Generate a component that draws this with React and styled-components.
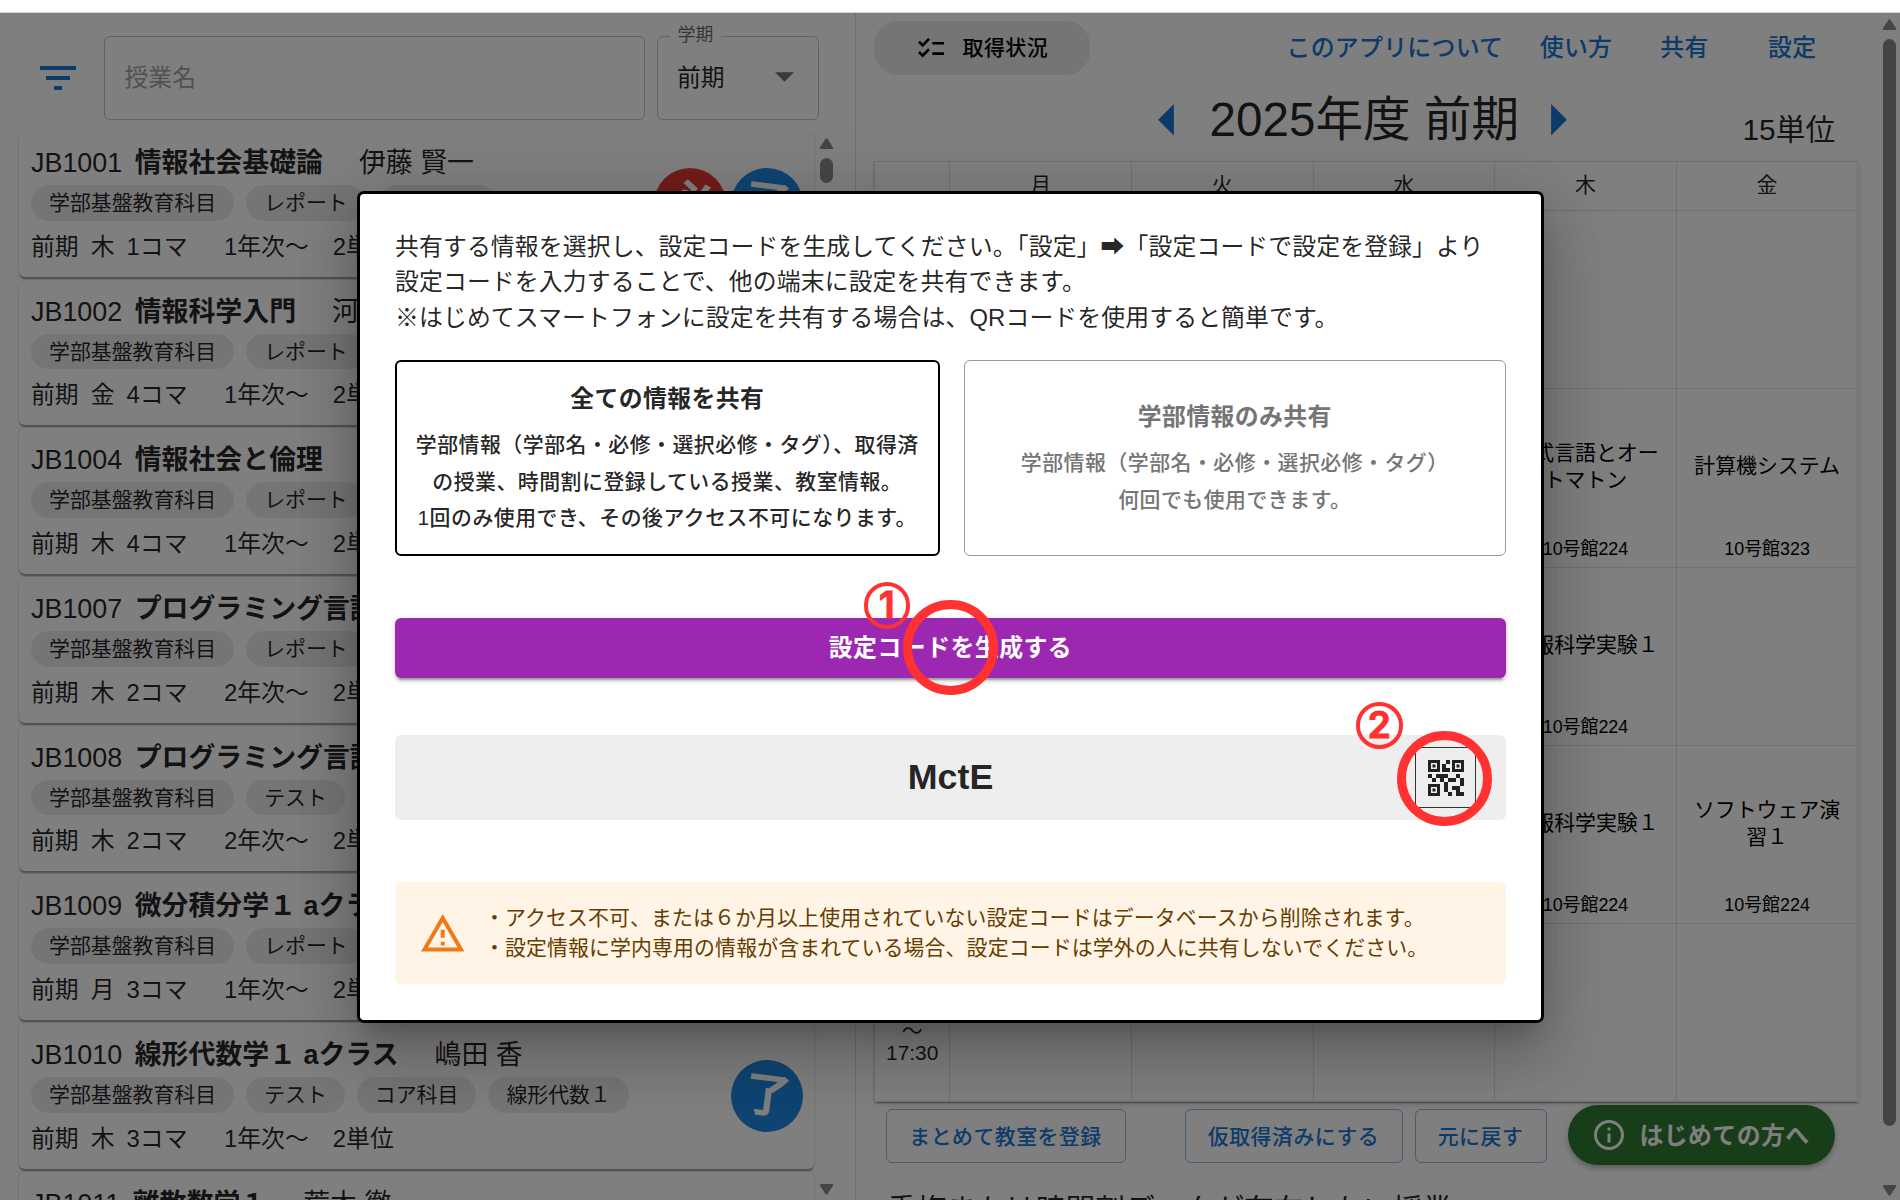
import React from 'react';
import styled, { createGlobalStyle } from 'styled-components';

const Global = createGlobalStyle`
  * { box-sizing: border-box; }
  html, body { margin: 0; padding: 0; height: 1200px; overflow: hidden; background: #fff; }
  body {
    font-family: "Liberation Sans", "Noto Sans CJK JP", sans-serif;
    color: rgba(0, 0, 0, 0.87);
  }
  button { font-family: inherit; background: none; border: 0; padding: 0; margin: 0; color: inherit; }
`;

const Page = styled.div`
  position: relative;
  display: flex;
  flex-direction: column;
  width: 1900px;
  height: 1200px;
  overflow: hidden;
`;
const TopStrip = styled.div`
  flex: none;
  height: 13px;
  border-bottom: 1px solid #d4d4d4;
`;
const Body = styled.div`
  flex: 1;
  display: flex;
  min-height: 0;
`;

/* ---------- left panel ---------- */
const LeftPanel = styled.aside`
  width: 856px;
  flex: none;
  display: flex;
  flex-direction: column;
  border-right: 1px solid #e0e0e0;
`;
const SearchBar = styled.div`
  flex: none;
  height: 118px;
  display: flex;
  align-items: flex-start;
  padding: 23px 0 0 40px;
`;
const FilterButton = styled.button`
  width: 36px;
  height: 83px;
  margin-right: 28px;
  display: flex;
  align-items: center;
  color: #1976d2;
`;
const Field = styled.div`
  position: relative;
  display: flex;
  align-items: center;
  justify-content: space-between;
  width: ${(p) => p.$w}px;
  height: 83.5px;
  margin-right: 12px;
  padding: 0 24px 4px 19.5px;
  border: 1.5px solid rgba(0, 0, 0, 0.23);
  border-radius: 6px;
  font-size: 23.85px;
  color: ${(p) => (p.$muted ? '#a2a2a2' : 'rgba(0,0,0,0.87)')};
`;
const FieldLabel = styled.label`
  position: absolute;
  left: 12px;
  top: -12px;
  padding: 0 8px;
  background: #fff;
  font-size: 17.9px;
  line-height: 20px;
  color: rgba(0, 0, 0, 0.6);
`;
const SelectArrow = styled.svg`
  display: block;
  margin-top: 3px;
`;
const ListArea = styled.div`
  flex: 1;
  min-height: 0;
  display: flex;
  padding-left: 19px;
  overflow: hidden;
`;
const CardList = styled.div`
  width: 795px;
  display: flex;
  flex-direction: column;
  gap: 3px;
  margin-right: 5px;
`;
const Card = styled.article`
  flex: none;
  display: flex;
  justify-content: space-between;
  align-items: center;
  height: 145.7px;
  padding: 0 11px 0 12px;
  border-radius: 6px;
  background: #fff;
  box-shadow: 0 3px 1.5px -1.5px rgba(0, 0, 0, 0.2), 0 1.5px 1.5px 0 rgba(0, 0, 0, 0.14),
    0 1.5px 4.5px 0 rgba(0, 0, 0, 0.12);
`;
const CardMain = styled.div`
  display: flex;
  flex-direction: column;
  align-self: flex-start;
  padding-top: 11px;
`;
const CardTitle = styled.div`
  display: flex;
  white-space: nowrap;
  font-size: 26.9px;
  line-height: 42px;
`;
const Code = styled.span`
  margin-right: 12.5px;
`;
const Subject = styled.strong`
  margin-right: 36px;
`;
const Chips = styled.div`
  display: flex;
  gap: 12px;
  margin-top: 1px;
`;
const Chip = styled.span`
  height: 35.6px;
  line-height: 35px;
  padding: 0 18px;
  border-radius: 18px;
  background: rgba(0, 0, 0, 0.08);
  font-size: 20.9px;
  white-space: nowrap;
`;
const Meta = styled.div`
  display: flex;
  margin-top: 8px;
  font-size: 23.85px;
  line-height: 36px;
  white-space: nowrap;
`;
const MetaItem = styled.span`
  margin-right: ${(p) => p.$gap || 12}px;
`;
const Badges = styled.div`
  display: flex;
  gap: 5px;
`;
const Badge = styled.span`
  width: 72px;
  height: 72px;
  border-radius: 50%;
  display: flex;
  align-items: center;
  justify-content: center;
  background: ${(p) => p.$bg};
  color: #fff;
  font-size: 47px;
  line-height: 60px;
  font-weight: 700;
`;
const BadgeText = styled.span`
  transform: rotate(7deg);
`;

/* ---------- scrollbars ---------- */
const Scrollbar = styled.div`
  flex: none;
  width: 15px;
  display: flex;
  flex-direction: column;
  align-items: center;
  margin-right: ${(p) => p.$edge || 0}px;
  padding: ${(p) => p.$pad};
`;
const Thumb = styled.div`
  width: 13px;
  height: ${(p) => p.$h}px;
  margin: 9px 0 auto;
  border-radius: 7px;
  background: #8b8b8b;
`;

/* ---------- right panel ---------- */
const RightPanel = styled.main`
  flex: 1;
  min-width: 0;
  display: flex;
  flex-direction: column;
  padding: 8px 0 0 18px;
`;
const TopRow = styled.div`
  flex: none;
  display: flex;
  align-items: center;
  height: 54px;
`;
const StatusChip = styled.button`
  display: flex;
  align-items: center;
  width: 216px;
  height: 54px;
  padding-left: 43.5px;
  gap: 19px;
  border-radius: 24px;
  background: rgba(0, 0, 0, 0.08);
  color: #000;
  font-size: 21px;
  letter-spacing: 0.4px;
  font-weight: 500;
`;
const StatusText = styled.span`
  padding-bottom: 4px;
`;
const Nav = styled.nav`
  display: flex;
  margin-left: 196.5px;
  padding-bottom: 4.5px;
`;
const NavLink = styled.button`
  font-size: 23.9px;
  letter-spacing: 0.27px;
  font-weight: 500;
  color: #1976d2;
  margin-right: ${(p) => p.$gap}px;
  white-space: nowrap;
`;
const TermRow = styled.div`
  flex: none;
  display: flex;
  align-items: center;
  height: 86px;
  padding: 4px 0 0 284px;
  color: #1976d2;
`;
const Term = styled.h1`
  margin: 0 32.5px 0 35.5px;
  font-size: 47.6px;
  line-height: 72px;
  font-weight: 400;
  color: rgba(0, 0, 0, 0.87);
  white-space: nowrap;
`;
const Credits = styled.span`
  margin: 14px 0 0 175px;
  font-size: 29.8px;
  color: rgba(0, 0, 0, 0.87);
`;
const Timetable = styled.div`
  flex: none;
  display: grid;
  grid-template-columns: 75.4px repeat(5, 181.6px);
  grid-template-rows: 49px repeat(5, 178.3px);
  width: 984.8px;
  border-top: 1px solid #e0e0e0;
  border-left: 1px solid #e0e0e0;
  box-shadow: 0 3px 1.5px -1.5px rgba(0, 0, 0, 0.2), 0 1.5px 1.5px 0 rgba(0, 0, 0, 0.14),
    0 1.5px 4.5px 0 rgba(0, 0, 0, 0.12);
`;
const Cell = styled.div`
  display: flex;
  flex-direction: column;
  align-items: center;
  justify-content: center;
  text-align: center;
  border-right: 1px solid #e0e0e0;
  border-bottom: 1px solid #e0e0e0;
  font-size: 20.9px;
  line-height: 27px;
`;
const DayCell = styled(Cell)`
  padding-bottom: 3.5px;
`;
const TimeCell = styled(Cell)`
  justify-content: flex-end;
  padding: 0 0 37px;
  line-height: 22px;
`;
const Lecture = styled.div`
  flex: 1;
  display: flex;
  align-items: center;
  padding-top: 7px;
  color: #000;
`;
const Room = styled.div`
  font-size: 17.9px;
  height: 31px;
  line-height: 26px;
  color: #000;
`;
const Actions = styled.div`
  flex: none;
  display: flex;
  align-items: flex-start;
  padding: 3px 0 0 11.5px;
`;
const OutlineButton = styled.button`
  width: ${(p) => p.$w}px;
  height: 54px;
  margin: 4px ${(p) => p.$gap}px 0 0;
  padding-bottom: 3px;
  border: 1.5px solid rgba(25, 118, 210, 0.5);
  border-radius: 6px;
  color: #1976d2;
  font-size: 20.9px;
  letter-spacing: 0.5px;
  font-weight: 500;
`;
const GuideButton = styled.button`
  display: flex;
  align-items: center;
  justify-content: center;
  gap: 15px;
  width: 267px;
  height: 60px;
  padding-left: 2px;
  border-radius: 30px;
  background: #2e7d32;
  color: #fff;
  font-size: 23.9px;
  letter-spacing: 0.4px;
  font-weight: 700;
  box-shadow: 0 4px 5px -1px rgba(0, 0, 0, 0.2), 0 2px 8px 0 rgba(0, 0, 0, 0.14);
`;
const GuideText = styled.span`
  padding-bottom: 3px;
`;
const SectionTitle = styled.h2`
  flex: none;
  margin: 22px 0 0 13px;
  font-size: 29.75px;
  line-height: 46px;
  font-weight: 400;
  white-space: nowrap;
`;

/* ---------- modal ---------- */
const Backdrop = styled.div`
  position: absolute;
  inset: 13px 0 0 0;
  display: flex;
  align-items: center;
  justify-content: center;
  background: rgba(0, 0, 0, 0.5);
`;
const Modal = styled.section`
  width: 1187px;
  height: 832px;
  padding: 35px 34.5px 35px 35.5px;
  border: 3px solid #000;
  border-radius: 7px;
  background: #fff;
  display: flex;
  flex-direction: column;
  box-shadow: 0 16px 22px -10px rgba(0, 0, 0, 0.2), 0 36px 57px 4px rgba(0, 0, 0, 0.14),
    0 13px 69px 12px rgba(0, 0, 0, 0.12);
`;
const Lead = styled.p`
  margin: 0 0 24px;
  font-size: 23.85px;
  letter-spacing: 0.12px;
  line-height: 35.8px;
  white-space: nowrap;
`;
const Options = styled.div`
  display: flex;
  gap: 24px;
`;
const Option = styled.button`
  flex: 1;
  height: 196.5px;
  display: flex;
  flex-direction: column;
  align-items: center;
  justify-content: center;
  padding-bottom: 2px;
  border: ${(p) => (p.$on ? '2px solid #000' : '1.5px solid #9a9a9a')};
  border-radius: 6px;
  color: ${(p) => (p.$on ? 'rgba(0,0,0,0.87)' : '#757575')};
`;
const OptionTitle = styled.span`
  font-size: 23.85px;
  line-height: 42px;
  font-weight: 700;
  letter-spacing: 0.4px;
  margin-bottom: 7px;
`;
const OptionText = styled.span`
  font-size: 20.9px;
  line-height: 36.2px;
  font-weight: 500;
  letter-spacing: 0.5px;
  white-space: nowrap;
`;
const Generate = styled.button`
  flex: none;
  height: 59.5px;
  margin-top: 62px;
  padding-bottom: 5px;
  border-radius: 6px;
  background: #9c27b0;
  color: #fff;
  font-size: 23.85px;
  letter-spacing: 0.5px;
  font-weight: 700;
  box-shadow: 0 4.5px 1.5px -3px rgba(0, 0, 0, 0.2), 0 3px 3px 0 rgba(0, 0, 0, 0.14),
    0 1.5px 7.5px 0 rgba(0, 0, 0, 0.12);
`;
const CodeBox = styled.div`
  flex: none;
  display: grid;
  grid-template-columns: 91px 1fr 91px;
  align-items: center;
  height: 85px;
  margin-top: 57.5px;
  border-radius: 6px;
  background: #eee;
`;
const CodeText = styled.strong`
  grid-column: 2;
  text-align: center;
  font-size: 35.8px;
`;
const QrButton = styled.button`
  width: 61px;
  height: 61px;
  display: flex;
  align-items: center;
  justify-content: center;
  border: 1px solid #333;
  color: #212121;
`;
const Alert = styled.div`
  flex: none;
  display: flex;
  align-items: center;
  height: 101.5px;
  margin-top: 62px;
  padding-left: 25.5px;
  gap: 20px;
  border-radius: 6px;
  background: #fff4e5;
  color: #663c00;
`;
const AlertIcon = styled.span`
  display: flex;
  color: #ef7a19;
`;
const AlertText = styled.p`
  margin: 0;
  padding-bottom: 1px;
  font-size: 20.9px;
  letter-spacing: 0.12px;
  line-height: 29.8px;
  white-space: nowrap;
`;

/* ---------- guide marks over the page ---------- */
const Ring = styled.div`
  position: absolute;
  left: ${(p) => p.$x}px;
  top: ${(p) => p.$y}px;
  width: 95px;
  height: 95px;
  border: 9px solid #ff3131;
  border-radius: 50%;
`;
const StepMark = styled.div`
  position: absolute;
  left: ${(p) => p.$x}px;
  top: ${(p) => p.$y}px;
  width: 46.5px;
  height: 46.5px;
  border: 4px solid #ff3131;
  border-radius: 50%;
  display: flex;
  align-items: center;
  justify-content: center;
  color: #ff3131;
  font-family: Inter, sans-serif;
  font-size: 37px;
  line-height: 38px;
  font-weight: 600;
  -webkit-text-stroke: 1.2px #ff3131;
`;

const IconSvg = styled.svg`
  display: block;
  flex: none;
`;

const Glyph = ({ box, w, h, d }) => (
  <IconSvg viewBox={box} width={w} height={h} fill="currentColor">
    <path d={d} />
  </IconSvg>
);

const PATHS = {
  filter: 'M10 18h4v-2h-4v2zM3 6v2h18V6H3zm3 7h12v-2H6v2z',
  checklist:
    'M22 7h-9v2h9V7zm0 8h-9v2h9v-2zM5.54 11L2 7.46l1.41-1.41 2.12 2.12 4.24-4.24 1.41 1.41L5.54 11zm0 8L2 15.46l1.41-1.41 2.12 2.12 4.24-4.24 1.41 1.41L5.54 19z',
  info: 'M11 7h2v2h-2zm0 4h2v6h-2zm1-9C6.48 2 2 6.48 2 12s4.48 10 10 10 10-4.48 10-10S17.52 2 12 2zm0 18c-4.41 0-8-3.59-8-8s3.59-8 8-8 8 3.59 8 8-3.59 8-8 8z',
  warning: 'M12 5.99L19.53 19H4.47L12 5.99M12 2L1 21h22L12 2zm1 14h-2v2h2v-2zm0-6h-2v4h2v-4z',
  qr: 'M15 21h-2v-2h2v2zm-2-7h-2v5h2v-5zm8-2h-2v4h2v-4zm-2-2h-2v2h2v-2zM7 12H5v2h2v-2zm-2-2H3v2h2v-2zm7-5h2V3h-2v2zm-7.5-.5v3h3v-3h-3zM9 9H3V3h6v6zm-4.5 7.5v3h3v-3h-3zM9 21H3v-6h6v6zm7.5-16.5v3h3v-3h-3zM21 9h-6V3h6v6zm-2 10v-3h-4v2h2v3h4v-2h-2zm-2-7h-4v2h4v-2zm-4-2H7v2h2v2h2v-2h2v-2zm1-1V7h-2V5h-2v4h4zM6.75 5.25h-1.5v1.5h1.5v-1.5zm0 12h-1.5v1.5h1.5v-1.5zm12-12h-1.5v1.5h1.5v-1.5z',
  arrowUp: 'M2 11h11q2 0 1-1.800L8.600 1q-1.100-1.500-2.200 0L1 9.200Q0 11 2 11z',
  arrowDown: 'M2 0h11q2 0 1 1.800L8.600 10q-1.100 1.500-2.200 0L1 1.800Q0 0 2 0z',
};

const ArrowSvg = styled(IconSvg)`
  color: #8b8b8b;
`;
const ScrollArrow = ({ down }) => (
  <ArrowSvg width="15" height="11" viewBox="0 0 15 11" fill="currentColor">
    <path d={down ? PATHS.arrowDown : PATHS.arrowUp} />
  </ArrowSvg>
);

const COURSES = [
  { code: 'JB1001', name: '情報社会基礎論', by: '伊藤 賢一', chips: ['学部基盤教育科目', 'レポート', 'コア科目'], day: '木', slot: '1コマ', year: '1年次〜', badges: ['必', '了'] },
  { code: 'JB1002', name: '情報科学入門', by: '河', chips: ['学部基盤教育科目', 'レポート'], day: '金', slot: '4コマ', year: '1年次〜' },
  { code: 'JB1004', name: '情報社会と倫理', chips: ['学部基盤教育科目', 'レポート'], day: '木', slot: '4コマ', year: '1年次〜' },
  { code: 'JB1007', name: 'プログラミング言語', chips: ['学部基盤教育科目', 'レポート'], day: '木', slot: '2コマ', year: '2年次〜' },
  { code: 'JB1008', name: 'プログラミング言語', chips: ['学部基盤教育科目', 'テスト'], day: '木', slot: '2コマ', year: '2年次〜' },
  { code: 'JB1009', name: '微分積分学１ aクラス', chips: ['学部基盤教育科目', 'レポート'], day: '月', slot: '3コマ', year: '1年次〜' },
  { code: 'JB1010', name: '線形代数学１ aクラス', by: '嶋田 香', chips: ['学部基盤教育科目', 'テスト', 'コア科目', '線形代数１'], day: '木', slot: '3コマ', year: '1年次〜', badges: ['了'] },
  { code: 'JB1011', name: '離散数学１', by: '荒木 徹', chips: [], day: '', slot: '', year: '' },
];

const BADGE_COLORS = { 必: '#e53935', 了: '#1e88e5' };

const DAYS = ['月', '火', '水', '木', '金'];
const ROWS = [
  [null, null, null, null, null],
  [null, null, null, { t: ['形式言語とオー', 'トマトン'], r: '10号館224' }, { t: ['計算機システム'], r: '10号館323' }],
  [null, null, null, { t: ['情報科学実験１'], r: '10号館224' }, null],
  [null, null, null, { t: ['情報科学実験１'], r: '10号館224' }, { t: ['ソフトウェア演', '習１'], r: '10号館224' }],
  [null, null, null, null, null],
];

const Lines = ({ items }) =>
  items.map((line, i) => (
    <React.Fragment key={i}>
      {i > 0 && <br />}
      {line}
    </React.Fragment>
  ));

const CourseCard = ({ c }) => (
  <Card>
    <CardMain>
      <CardTitle>
        <Code>{c.code}</Code>
        <Subject>{c.name}</Subject>
        {c.by && <span>{c.by}</span>}
      </CardTitle>
      <Chips>
        {c.chips.map((t) => (
          <Chip key={t}>{t}</Chip>
        ))}
      </Chips>
      {c.day && (
        <Meta>
          <MetaItem>前期</MetaItem>
          <MetaItem>{c.day}</MetaItem>
          <MetaItem $gap={36.5}>{c.slot}</MetaItem>
          <MetaItem $gap={24}>{c.year}</MetaItem>
          <span>2単位</span>
        </Meta>
      )}
    </CardMain>
    {c.badges && (
      <Badges>
        {c.badges.map((b) => (
          <Badge key={b} $bg={BADGE_COLORS[b]}>
            <BadgeText>{b}</BadgeText>
          </Badge>
        ))}
      </Badges>
    )}
  </Card>
);

export default function App() {
  return (
    <Page>
      <Global />
      <TopStrip />
      <Body>
        <LeftPanel>
          <SearchBar>
            <FilterButton>
              <Glyph box="3 6 18 12" w={36} h={24} d={PATHS.filter} />
            </FilterButton>
            <Field $w={540.5} $muted>
              授業名
            </Field>
            <Field $w={162}>
              <FieldLabel>学期</FieldLabel>
              前期
              <SelectArrow width="19" height="10" viewBox="0 0 10 5" fill="#757575">
                <path d="M0 0l5 5 5-5z" />
              </SelectArrow>
            </Field>
          </SearchBar>
          <ListArea>
            <CardList>
              {COURSES.map((c) => (
                <CourseCard key={c.code} c={c} />
              ))}
            </CardList>
            <Scrollbar $pad="7px 0 5px">
              <ScrollArrow />
              <Thumb $h={25} />
              <ScrollArrow down />
            </Scrollbar>
          </ListArea>
        </LeftPanel>

        <RightPanel>
          <TopRow>
            <StatusChip>
              <Glyph box="2 3.9 20 15.1" w={26} h={19.5} d={PATHS.checklist} />
              <StatusText>取得状況</StatusText>
            </StatusChip>
            <Nav>
              <NavLink $gap={36.5}>このアプリについて</NavLink>
              <NavLink $gap={48}>使い方</NavLink>
              <NavLink $gap={59.5}>共有</NavLink>
              <NavLink $gap={0}>設定</NavLink>
            </Nav>
          </TopRow>
          <TermRow>
            <Glyph box="0 0 5 10" w={16} h={31.5} d="M5 0L0 5l5 5z" />
            <Term>2025年度 前期</Term>
            <Glyph box="0 0 5 10" w={16} h={31.5} d="M0 0l5 5-5 5z" />
            <Credits>15単位</Credits>
          </TermRow>
          <Timetable>
            <Cell />
            {DAYS.map((d) => (
              <DayCell key={d}>{d}</DayCell>
            ))}
            {ROWS.map((row, r) => (
              <React.Fragment key={r}>
                <TimeCell>
                  {r === 4 && (
                    <>
                      <span>〜</span>
                      <span>17:30</span>
                    </>
                  )}
                </TimeCell>
                {row.map((cell, i) => (
                  <Cell key={i}>
                    {cell && (
                      <>
                        <Lecture>
                          <span>
                            <Lines items={cell.t} />
                          </span>
                        </Lecture>
                        <Room>{cell.r}</Room>
                      </>
                    )}
                  </Cell>
                ))}
              </React.Fragment>
            ))}
          </Timetable>
          <Actions>
            <OutlineButton $w={240} $gap={59}>まとめて教室を登録</OutlineButton>
            <OutlineButton $w={218} $gap={12}>仮取得済みにする</OutlineButton>
            <OutlineButton $w={132} $gap={21}>元に戻す</OutlineButton>
            <GuideButton>
              <Glyph box="2 2 20 20" w={30} h={30} d={PATHS.info} />
              <GuideText>はじめての方へ</GuideText>
            </GuideButton>
          </Actions>
          <SectionTitle>重複または時間割データが存在しない授業</SectionTitle>
        </RightPanel>
        <Scrollbar $pad="6px 0 4px" $edge={3}>
          <ScrollArrow />
          <Thumb $h={1087} />
          <ScrollArrow down />
        </Scrollbar>
      </Body>

      <Backdrop>
        <Modal>
          <Lead>
            共有する情報を選択し、設定コードを生成してください。「設定」➡「設定コードで設定を登録」より
            <br />
            設定コードを入力することで、他の端末に設定を共有できます。
            <br />
            ※はじめてスマートフォンに設定を共有する場合は、QRコードを使用すると簡単です。
          </Lead>
          <Options>
            <Option $on>
              <OptionTitle>全ての情報を共有</OptionTitle>
              <OptionText>
                学部情報（学部名・必修・選択必修・タグ）、取得済
                <br />
                の授業、時間割に登録している授業、教室情報。
                <br />
                1回のみ使用でき、その後アクセス不可になります。
              </OptionText>
            </Option>
            <Option>
              <OptionTitle>学部情報のみ共有</OptionTitle>
              <OptionText>
                学部情報（学部名・必修・選択必修・タグ）
                <br />
                何回でも使用できます。
              </OptionText>
            </Option>
          </Options>
          <Generate>設定コードを生成する</Generate>
          <CodeBox>
            <CodeText>MctE</CodeText>
            <QrButton>
              <Glyph box="3 3 18 18" w={36} h={36} d={PATHS.qr} />
            </QrButton>
          </CodeBox>
          <Alert>
            <AlertIcon>
              <Glyph box="1 2 22 19" w={43.5} h={37.5} d={PATHS.warning} />
            </AlertIcon>
            <AlertText>
              ・アクセス不可、または６か月以上使用されていない設定コードはデータベースから削除されます。
              <br />
              ・設定情報に学内専用の情報が含まれている場合、設定コードは学外の人に共有しないでください。
            </AlertText>
          </Alert>
        </Modal>
      </Backdrop>

      <Ring $x={902.5} $y={600} />
      <StepMark $x={863.5} $y={582}>1</StepMark>
      <Ring $x={1397} $y={731} />
      <StepMark $x={1356} $y={702}>2</StepMark>
    </Page>
  );
}
